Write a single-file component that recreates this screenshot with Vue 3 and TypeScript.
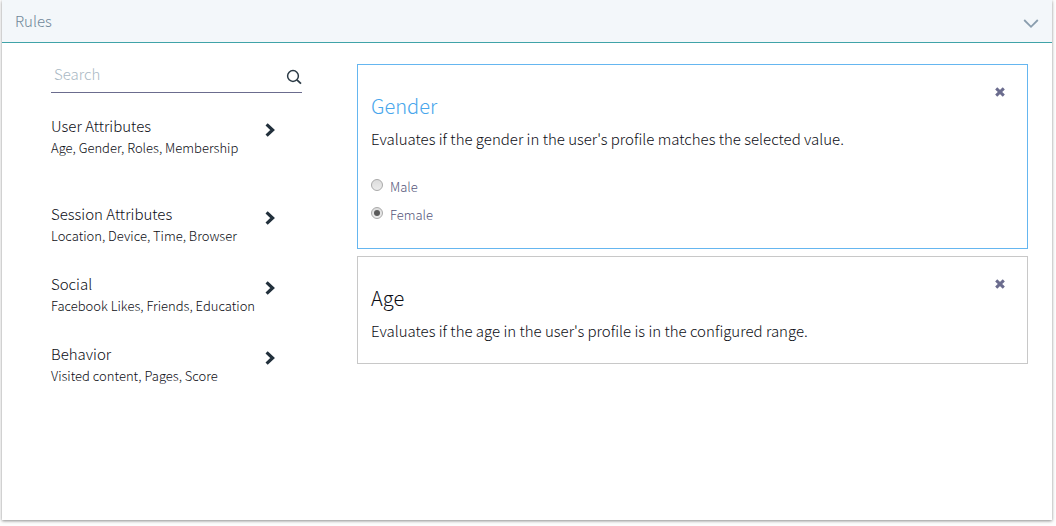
<script setup lang="ts">
import { ref } from 'vue'

interface RuleGroup {
  title: string
  summary: string
  spaced?: boolean
}

const groups: RuleGroup[] = [
  { title: 'User Attributes', summary: 'Age, Gender, Roles, Membership', spaced: true },
  { title: 'Session Attributes', summary: 'Location, Device, Time, Browser' },
  { title: 'Social', summary: 'Facebook Likes, Friends, Education' },
  { title: 'Behavior', summary: 'Visited content, Pages, Score' },
]

const genders: string[] = ['Male', 'Female']
const gender = ref<string>('Female')
const query = ref<string>('')
</script>

<template>
  <div class="page">
    <section class="panel">
      <header class="panel-header">
        <h1 class="panel-title">Rules</h1>
        <button class="icon-button" type="button" aria-label="Collapse rules">
          <svg width="16" height="10" viewBox="0 0 16 10" aria-hidden="true">
            <path d="M1.2 1 8 7.8 14.8 1" fill="none" stroke="#8a9eae" stroke-width="1.8" />
          </svg>
        </button>
      </header>

      <div class="panel-body">
        <aside class="sidebar">
          <form class="search" role="search" @submit.prevent>
            <input v-model="query" class="search-input" type="text" placeholder="Search" aria-label="Search" />
            <button class="icon-button" type="submit" aria-label="Run search">
              <svg width="16" height="16" viewBox="0 0 16 16" aria-hidden="true">
                <circle cx="7" cy="7" r="5.4" fill="none" stroke="#2b3a45" stroke-width="1.5" />
                <path d="M10.9 10.9 15 14.6" fill="none" stroke="#2b3a45" stroke-width="1.8" />
              </svg>
            </button>
          </form>

          <ul class="groups">
            <li v-for="group in groups" :key="group.title" class="group" :class="{ spaced: group.spaced }">
              <button class="group-button" type="button">
                <span class="group-title">{{ group.title }}</span>
                <span class="group-summary">{{ group.summary }}</span>
                <svg class="group-arrow" width="10" height="14" viewBox="0 0 10 14" aria-hidden="true">
                  <path d="M1.6 1.4 7.6 7 1.6 12.6" fill="none" stroke="#22303c" stroke-width="3.2" />
                </svg>
              </button>
            </li>
          </ul>
        </aside>

        <main class="cards">
          <article class="card active">
            <button class="icon-button close" type="button" aria-label="Remove Gender">
              <svg width="10" height="10" viewBox="0 0 10 10" aria-hidden="true">
                <path d="M1.2 1.4 8.8 8.6M8.8 1.4 1.2 8.6" fill="none" stroke="#6b6c8e" stroke-width="3" />
              </svg>
            </button>
            <h2 class="card-title">Gender</h2>
            <p class="card-text">Evaluates if the gender in the user's profile matches the selected value.</p>
            <div class="options" role="radiogroup" aria-label="Gender">
              <label v-for="option in genders" :key="option" class="option">
                <input v-model="gender" class="radio" type="radio" name="gender" :value="option" />
                <span>{{ option }}</span>
              </label>
            </div>
          </article>

          <article class="card">
            <button class="icon-button close" type="button" aria-label="Remove Age">
              <svg width="10" height="10" viewBox="0 0 10 10" aria-hidden="true">
                <path d="M1.2 1.4 8.8 8.6M8.8 1.4 1.2 8.6" fill="none" stroke="#6b6c8e" stroke-width="3" />
              </svg>
            </button>
            <h2 class="card-title">Age</h2>
            <p class="card-text">Evaluates if the age in the user's profile is in the configured range.</p>
          </article>
        </main>
      </div>
    </section>
  </div>
</template>

<style>
body {
  background: #fdfdfd;
}
</style>

<style scoped>
.page,
.page * {
  box-sizing: border-box;
}

.page {
  display: flex;
  min-height: 100vh;
  padding: 0 4px 6px 2px;
}

.panel {
  flex: 1;
  min-width: 0;
  background: #fff;
  box-shadow: 0 1px 3px rgba(0, 0, 0, 0.45);
  color: #0c0d14;
  font-family: "Noto Sans CJK SC", "Open Sans", sans-serif;
  font-size: 15px;
  font-weight: 300;
}

.panel-header {
  display: flex;
  align-items: center;
  justify-content: space-between;
  height: 43px;
  padding: 0 13px;
  background: #f3f7fa;
  border-bottom: 1px solid #3fa3a8;
}

.panel-title {
  margin: 0;
  color: #6f8799;
  font-size: 15px;
  font-weight: 300;
  line-height: 22px;
}

.icon-button {
  display: block;
  margin: 0;
  padding: 0;
  border: 0;
  background: none;
  cursor: pointer;
}

.icon-button svg {
  display: block;
}

.panel-header .icon-button {
  padding-top: 5px;
}

.panel-body {
  display: grid;
  grid-template-columns: 251px 1fr;
  column-gap: 55px;
  padding: 21px 24px 24px 49px;
}

.search {
  display: flex;
  align-items: center;
  height: 29px;
  padding-bottom: 2px;
  border-bottom: 1px solid #6b6c8e;
}

.search-input {
  flex: 1;
  min-width: 0;
  height: 22px;
  margin: 0 0 8px;
  padding: 0 3px;
  border: 0;
  outline: 0;
  background: none;
  color: inherit;
  font: inherit;
}

.search-input::placeholder {
  color: #a9b8c4;
}

.groups {
  margin: 22px 0 0;
  padding: 0;
  list-style: none;
}

.group {
  margin-bottom: 26px;
}

.group.spaced {
  margin-bottom: 44px;
}

.group-button {
  position: relative;
  display: block;
  width: 100%;
  padding: 0;
  border: 0;
  background: none;
  color: inherit;
  font: inherit;
  text-align: left;
  cursor: pointer;
}

.group-title,
.group-summary {
  display: block;
  line-height: 22px;
}

.group-summary {
  font-size: 13px;
}

.group-arrow {
  position: absolute;
  top: 8px;
  right: 27px;
}

.cards {
  display: grid;
  align-content: start;
  row-gap: 7px;
}

.card {
  position: relative;
  padding: 25px 13px 20px;
  border: 1px solid #c8c8c8;
}

.card.active {
  border-color: #65b6f0;
}

.close {
  position: absolute;
  top: 22px;
  right: 22px;
}

.card-title {
  margin: 0;
  font-size: 20px;
  font-weight: 300;
  line-height: 32px;
}

.card.active .card-title {
  color: #48a6ec;
}

.card-text {
  margin: 5px 0 0;
  line-height: 24px;
}

.options {
  padding-top: 21px;
}

.option {
  display: flex;
  align-items: center;
  height: 28px;
  color: #54557a;
  font-size: 13px;
}

.radio {
  display: grid;
  place-items: center;
  appearance: none;
  width: 12px;
  height: 12px;
  margin: 0 7px 3px 0;
  border: 1px solid #a9a9a9;
  border-radius: 50%;
  background: linear-gradient(#dcdcdc, #ececec);
}

.radio:checked::before {
  content: "";
  width: 6px;
  height: 6px;
  border-radius: 50%;
  background: #5a5a5a;
}
</style>
